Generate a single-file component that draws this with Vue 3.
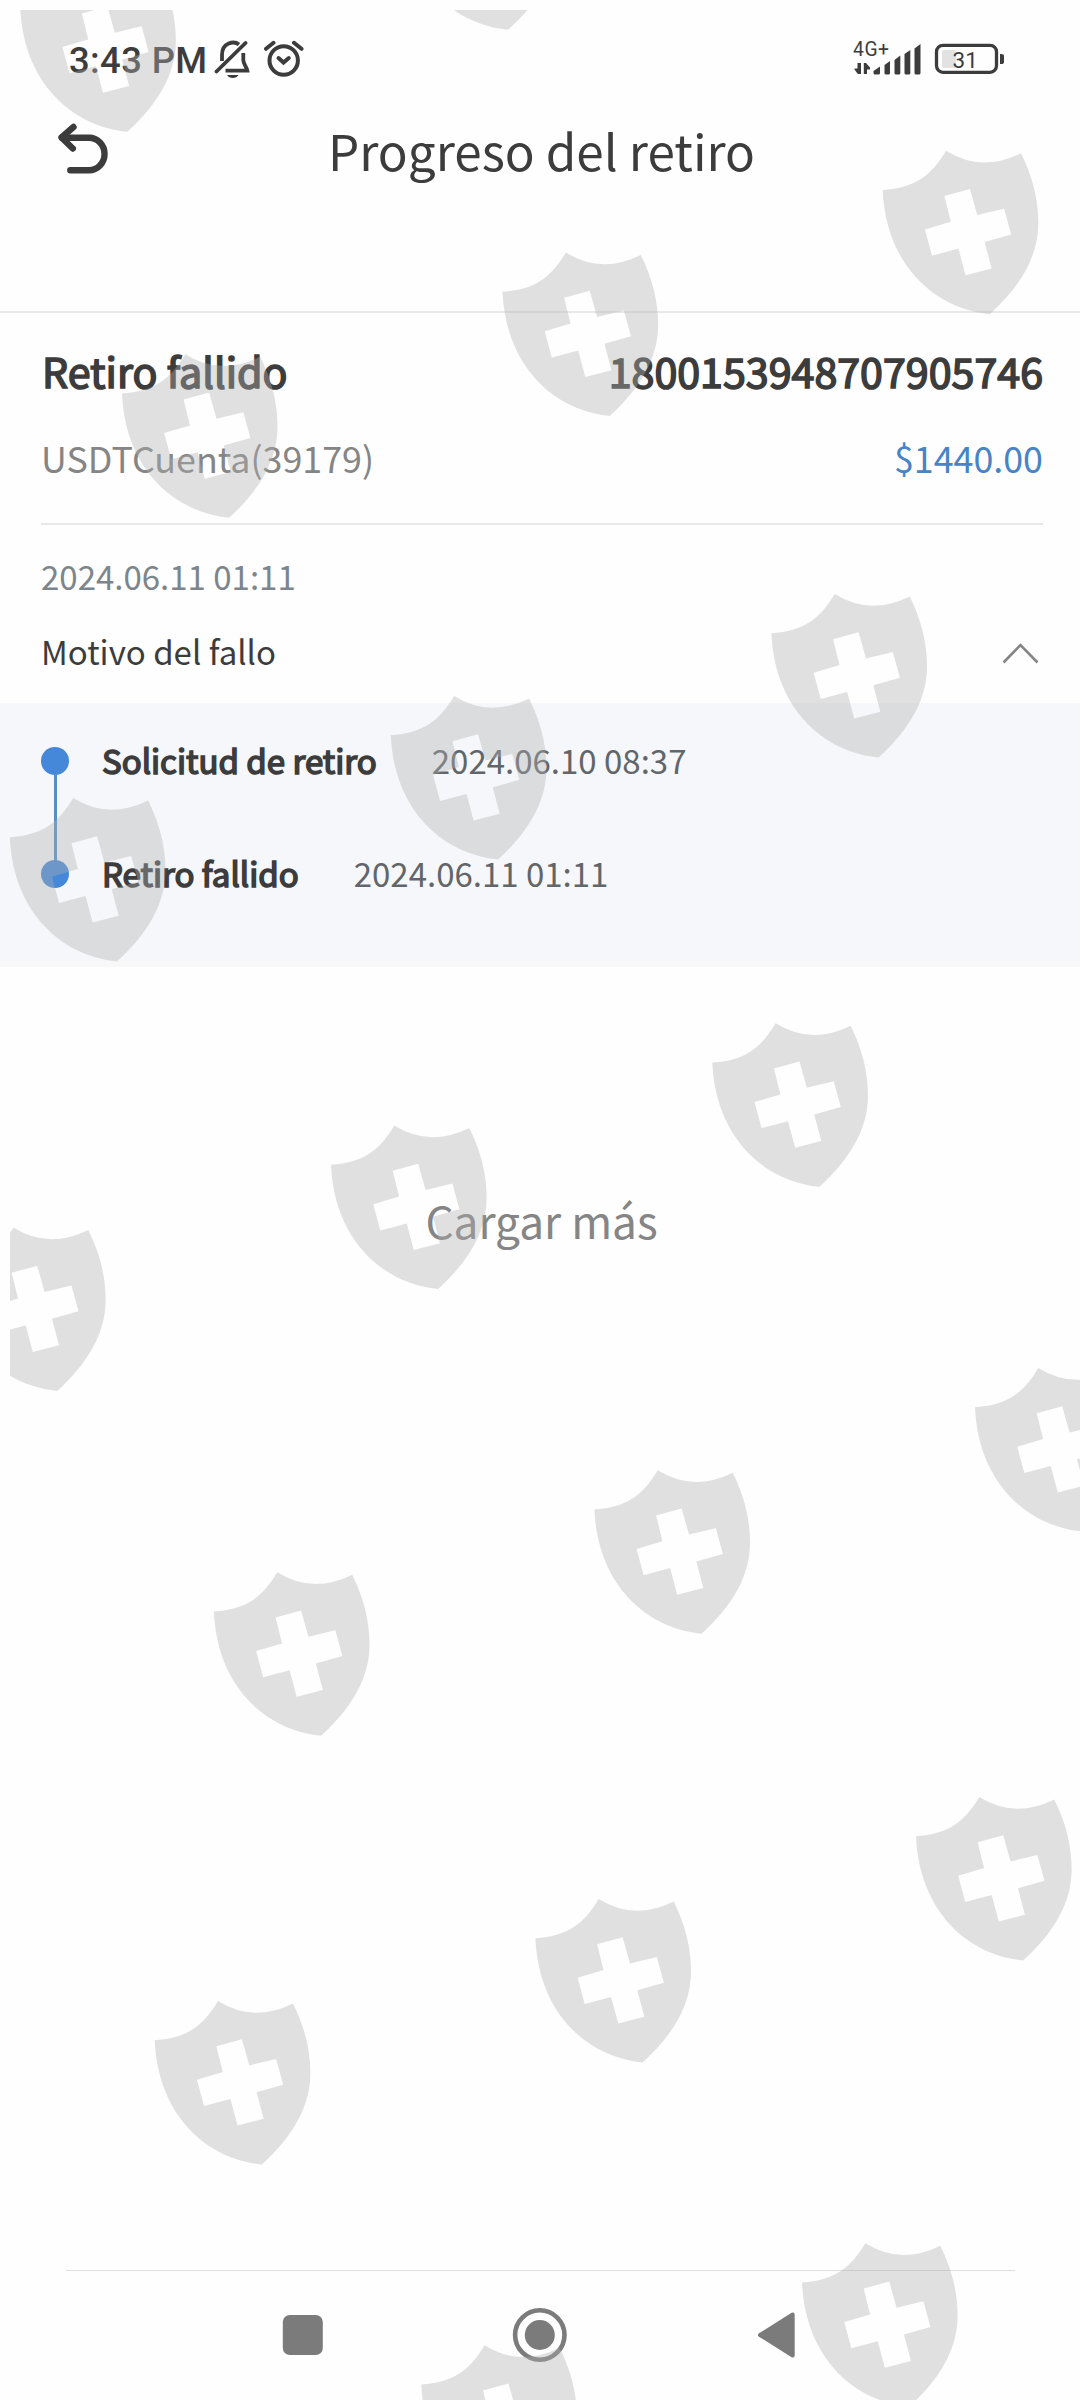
<script setup>
const steps = [
  { label: 'Solicitud de retiro', time: '2024.06.10 08:37' },
  { label: 'Retiro fallido', time: '2024.06.11 01:11' },
]

// Top-left corners of the repeated watermark emblem
const marks = [
  [20.2, -31.7], [401, -133.7],
  [882.7, 150.7], [502.5, 252.5], [121.9, 354.3],
  [771.4, 594], [390.8, 696], [9.8, 798],
  [712.3, 1023.3], [331, 1125.5], [-50, 1227.5],
  [975, 1368], [594.4, 1470.2], [213.9, 1572.3],
  [916, 1797], [535.4, 1899], [154.7, 2001],
  [802, 2243.3], [421.3, 2345.3],
]
</script>

<template>
  <div class="screen">
    <header class="status">
      <span class="clock">3:43 PM</span>
      <svg class="bell" width="36" height="40" viewBox="214 40 36 40" fill="none" stroke="#3c3c3c" stroke-width="3.8">
        <path d="M222 61V55C222 42.500 234 40.500 239 44.500" />
        <path d="M243.300 53V60C243.300 64 246.500 66.500 247.300 70.700H225.500" />
        <path d="M216.500 71.500L245.500 43" stroke-linecap="round" />
        <path d="M227 75H238.500C236.500 79 229 79 227 75Z" fill="#3c3c3c" stroke="none" />
      </svg>
      <svg class="alarm" width="40" height="40" viewBox="264 40 40 40" fill="none" stroke="#3c3c3c" stroke-width="4">
        <circle cx="283.700" cy="60.500" r="14.200" />
        <path d="M278.500 58L283.500 62.500L288.800 58" stroke-linecap="round" />
        <path d="M266 48.800L273.500 42.800M294 42.800L301.500 48.800" stroke-linecap="round" />
      </svg>
      <svg class="network" width="154" height="56" viewBox="852 32 154 56" fill="#3c3c3c">
        <text x="853" y="55.700" font-size="19.300" textLength="36">4G+</text>
        <path d="M857.500 63H861V74H857.800L854.500 69.500V68.500H857.500ZM863.800 63H866L870 67.500V69.500H867V74H863.800Z" />
        <path d="M873.500 71L880 66.500V73Q880 74.500 878.500 74.500H875Q873.500 74.500 873.500 73Z" />
        <path d="M884.500 65L890 61V73Q890 74.500 888.500 74.500H886Q884.500 74.500 884.500 73Z" />
        <path d="M894.500 60L900.300 55.500V73Q900.300 74.500 899 74.500H896Q894.500 74.500 894.500 73Z" />
        <path d="M904.500 54L910.300 50V73Q910.300 74.500 909 74.500H906Q904.500 74.500 904.500 73Z" />
        <path d="M914.500 48.500L920.500 44V73Q920.500 74.500 919 74.500H916Q914.500 74.500 914.500 73Z" />
        <rect x="942" y="50" width="14" height="18" rx="2" fill="#e2e2e2" />
        <rect x="936.500" y="45.300" width="60" height="27" rx="6.500" fill="none" stroke="#3c3c3c" stroke-width="3.300" />
        <path d="M1000 54Q1004 53.500 1004 56V62Q1004 64.500 1000 64Z" />
        <text x="952.600" y="68" font-size="22.500">31</text>
      </svg>
    </header>

    <div class="titlebar">
      <svg class="back" width="56" height="56" viewBox="56 122 56 56" fill="none" stroke="#3c3c3c" stroke-width="6.400" stroke-linecap="round" stroke-linejoin="round">
        <path d="M73.500 127L61.500 137.500L72.800 148.500" />
        <path d="M62 137.700H89A15.500 16.200 0 0 1 89 170.200H70.300" />
      </svg>
      <h1>Progreso del retiro</h1>
    </div>

    <section class="summary">
      <div class="row main">
        <strong>Retiro fallido</strong>
        <strong class="order">1800153948707905746</strong>
      </div>
      <div class="row account">
        <span>USDTCuenta(39179)</span>
        <span class="amount">$1440.00</span>
      </div>
      <div class="row date">2024.06.11 01:11</div>
      <div class="row reason">
        <span>Motivo del fallo</span>
        <svg width="38" height="24" viewBox="0 0 38 24" fill="none" stroke="#858585" stroke-width="2.600">
          <path d="M1.500 20.500L18.500 3L35.500 20.500" />
        </svg>
      </div>
    </section>

    <ol class="steps">
      <li v-for="s in steps" :key="s.label">
        <i class="dot"></i>
        <strong>{{ s.label }}</strong>
        <time>{{ s.time }}</time>
      </li>
    </ol>

    <div class="more">Cargar más</div>

    <nav class="navbar">
      <svg width="1080" height="129" viewBox="0 2271 1080 129" fill="#7b7b7b">
        <rect x="282.800" y="2315" width="40" height="40" rx="7" />
        <circle cx="539.800" cy="2335" r="24.700" fill="none" stroke="#7b7b7b" stroke-width="4.600" />
        <circle cx="539.800" cy="2335" r="15" />
        <path d="M760 2335L792.700 2314.500V2355.500Z" stroke="#7b7b7b" stroke-width="4" stroke-linejoin="round" />
      </svg>
    </nav>

    <svg class="watermark" width="1070" height="2390" viewBox="10 10 1070 2390">
      <path
        v-for="(m, i) in marks"
        :key="i"
        :transform="`translate(${m[0]} ${m[1]}) scale(1.006)`"
        fill-rule="evenodd"
        d="M0 39C32 37 48 25 63 0Q98 22 137.500 2.500C149 26 154.700 48 154.700 72C154.700 104 138 134 106.500 162.500C50 157 3 112 0 39ZM61.300 45L67.700 70.700L42 78.300L49 104.300L75.300 97.300L82.300 123.700L108.300 117L101.300 90.700L127.700 83.300L120.700 57.700L94 64L86.700 38Z"
      />
    </svg>
  </div>
</template>

<style>
body {
  margin: 0;
  background: #fefefe;
}
</style>

<style scoped>
.screen {
  position: relative;
  display: flex;
  flex-direction: column;
  width: 1080px;
  height: 2400px;
  overflow: hidden;
  background: #fefefe;
  color: #3c3c3c;
  font-family: "Noto Sans CJK SC", sans-serif;
}
.status {
  display: flex;
  align-items: center;
  height: 120px;
  padding: 0 74px 0 69px;
  font-family: Roboto, sans-serif;
}
.clock {
  width: 145px;
  font-size: 36.4px;
  font-weight: 500;
  letter-spacing: 0.4px;
  white-space: nowrap;
}
.alarm {
  margin-left: 14px;
}
.network {
  margin-left: auto;
}
.titlebar {
  display: flex;
  align-items: center;
  height: 60px;
  padding: 0 56px 131px;
  border-bottom: 2px solid #e8e8e8;
}
h1 {
  flex: 1;
  margin: 0 53px 0 0;
  font-size: 49.4px;
  line-height: 60px;
  font-weight: 400;
  text-align: center;
}
strong {
  font-weight: 400;
  -webkit-text-stroke: 1.6px #3c3c3c;
}
.summary {
  padding: 0 37px 28px 41px;
}
.row {
  display: flex;
  align-items: center;
  justify-content: space-between;
  white-space: nowrap;
}
.main {
  height: 113px;
  padding: 0 0 1px 1px;
  font-size: 41.2px;
}
.account {
  height: 60px;
  padding-bottom: 36px;
  border-bottom: 2px solid #e8e8e8;
  color: #858585;
  font-size: 35.8px;
}
.amount {
  color: #4783c6;
}
.date {
  height: 102px;
  color: #7d858c;
  font-size: 33px;
}
.reason {
  height: 48px;
  font-size: 33px;
}
.reason svg {
  margin: 6px 3px 0 0;
}
.steps {
  margin: 0;
  padding: 0 0 32px;
  list-style: none;
  background: #f6f7fb;
  border-bottom: 6px solid #f8f8f8;
}
.steps li {
  display: flex;
  align-items: center;
  height: 113px;
  padding-left: 41px;
  font-size: 33px;
  white-space: nowrap;
}
.dot {
  position: relative;
  width: 28px;
  height: 28px;
  margin: 3px 33px 0 0;
  border-radius: 50%;
  background: #4587d8;
}
.steps li:first-child .dot::after {
  content: "";
  position: absolute;
  left: 13px;
  top: 27px;
  width: 3px;
  height: 87px;
  background: #568fc6;
}
.steps time {
  margin-left: 55px;
  color: #61666a;
  font-size: 33px;
}
.more {
  margin: 223px 0 0 3px;
  color: #858585;
  font-size: 44.2px;
  line-height: 60px;
  text-align: center;
}
.navbar {
  margin-top: auto;
  height: 130px;
  background: linear-gradient(#dedede, #dedede) 66px 0 / 949px 1px no-repeat;
}
.navbar svg {
  display: block;
  margin-top: 1px;
}
.watermark {
  position: absolute;
  left: 10px;
  top: 10px;
  fill: rgba(175, 175, 175, 0.38);
  pointer-events: none;
}
</style>
